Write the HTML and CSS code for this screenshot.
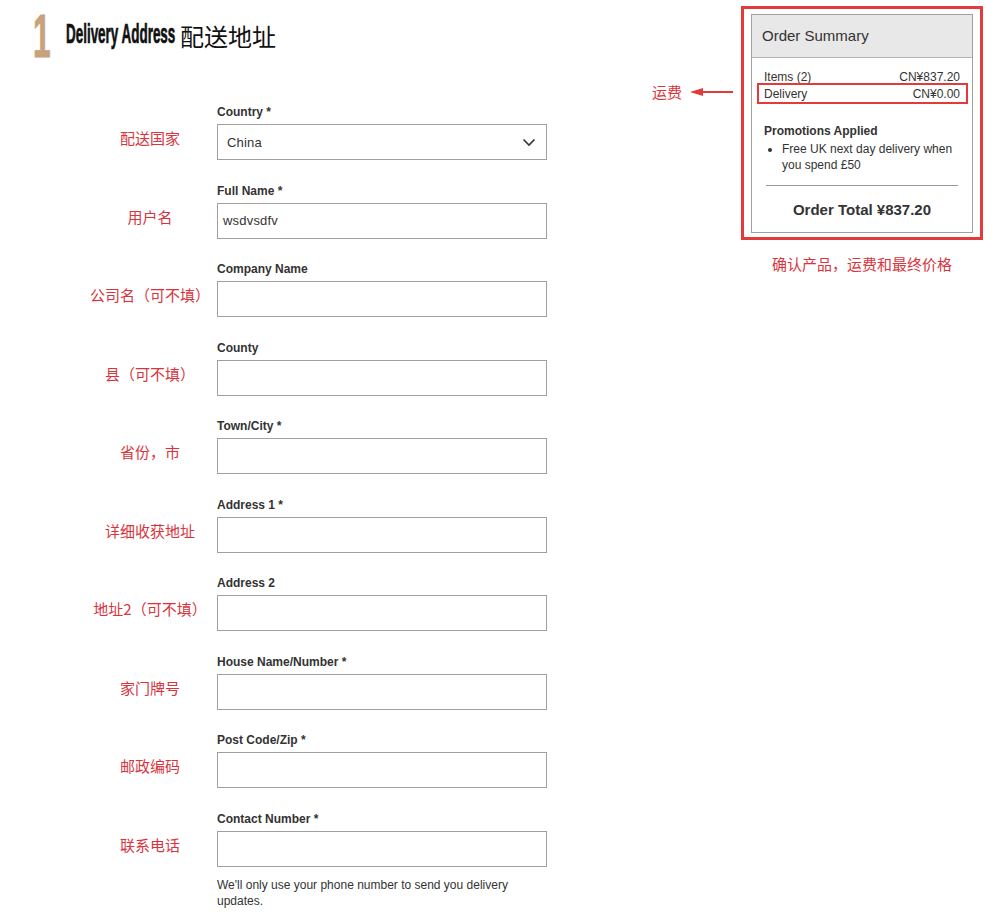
FILE: index.html
```html
<!DOCTYPE html>
<html lang="zh-CN">
<head>
<meta charset="utf-8">
<title>Delivery Address</title>
<link rel="stylesheet" href="styles.css">
</head>
<body>
<div class="layout">
  <div class="main">
    <h1 class="heading">
      <span class="step"><span class="step-num">1</span></span>
      <span class="title-en"><span class="title-en-inner">Delivery Address</span></span>
      <span class="title-zh">配送地址</span>
    </h1>

    <div class="form">
      <div class="field">
        <label class="label">Country *</label>
        <div class="note-zh">配送国家</div>
        <div class="box select"><span class="value value-select">China</span>
          <svg class="chevron" width="14" height="9" viewBox="0 0 14 9"><path d="M1.5 1.5 L7 7 L12.5 1.5" fill="none" stroke="#333" stroke-width="1.6"/></svg>
        </div>
      </div>
      <div class="field">
        <label class="label">Full Name *</label>
        <div class="note-zh">用户名</div>
        <div class="box"><span class="value">wsdvsdfv</span></div>
      </div>
      <div class="field">
        <label class="label">Company Name</label>
        <div class="note-zh">公司名（可不填）</div>
        <div class="box"></div>
      </div>
      <div class="field">
        <label class="label">County</label>
        <div class="note-zh">县（可不填）</div>
        <div class="box"></div>
      </div>
      <div class="field">
        <label class="label">Town/City *</label>
        <div class="note-zh">省份，市</div>
        <div class="box"></div>
      </div>
      <div class="field">
        <label class="label">Address 1 *</label>
        <div class="note-zh">详细收获地址</div>
        <div class="box"></div>
      </div>
      <div class="field">
        <label class="label">Address 2</label>
        <div class="note-zh">地址2（可不填）</div>
        <div class="box"></div>
      </div>
      <div class="field">
        <label class="label">House Name/Number *</label>
        <div class="note-zh">家门牌号</div>
        <div class="box"></div>
      </div>
      <div class="field">
        <label class="label">Post Code/Zip *</label>
        <div class="note-zh">邮政编码</div>
        <div class="box"></div>
      </div>
      <div class="field field-last">
        <label class="label">Contact Number *</label>
        <div class="note-zh">联系电话</div>
        <div class="box"></div>
        <p class="hint">We'll only use your phone number to send you delivery updates.</p>
      </div>
    </div>
  </div>

  <div class="aside">
    <div class="shipping-note">
      <span class="shipping-text">运费</span>
      <svg class="arrow" width="44" height="10" viewBox="0 0 44 10"><path d="M12 5 L43 5" stroke="#e53a3a" stroke-width="2"/><path d="M0 5 L13 1 L13 9 Z" fill="#e53a3a"/></svg>
    </div>
    <div class="summary-frame">
      <div class="summary">
        <div class="summary-head">Order Summary</div>
        <div class="summary-body">
          <div class="row"><span>Items (2)</span><span>CN¥837.20</span></div>
          <div class="row row-delivery"><span>Delivery</span><span>CN¥0.00</span><span class="mark"></span></div>
          <div class="promo-title">Promotions Applied</div>
          <ul class="promo-list">
            <li>Free UK next day delivery when you spend £50</li>
          </ul>
          <div class="divider"></div>
          <div class="total">Order Total ¥837.20</div>
        </div>
      </div>
    </div>
    <div class="summary-note">确认产品，运费和最终价格</div>
  </div>
</div>
</body>
</html>
```

FILE: styles.css
```css
html, body {
  margin: 0;
  padding: 0;
  background: #ffffff;
}
body {
  font-family: "Liberation Sans", Arial, sans-serif;
  color: #333333;
}
.layout {
  display: flex;
  align-items: flex-start;
}
.main {
  flex: 0 0 741px;
}
.heading {
  display: flex;
  align-items: center;
  margin: 0;
  padding: 10px 0 0 36px;
  height: 50px;
  font-weight: normal;
}
.step {
  display: inline-block;
  width: 30px;
  height: 50px;
  position: relative;
}
.step-num {
  position: absolute;
  left: -3px;
  top: -4px;
  font-family: "Liberation Sans", Arial, sans-serif;
  font-weight: bold;
  font-size: 61px;
  line-height: 61px;
  color: #c9a17a;
  transform: scaleX(0.52);
  transform-origin: left top;
  -webkit-text-stroke: 1px #c9a17a;
}
.title-en {
  display: inline-block;
  width: 114px;
  height: 30px;
  position: relative;
}
.title-en-inner {
  position: absolute;
  left: 0;
  top: -2px;
  white-space: nowrap;
  font-weight: bold;
  font-size: 28px;
  line-height: 32px;
  color: #111111;
  transform: scaleX(0.48);
  transform-origin: left top;
  -webkit-text-stroke: 0.7px #111111;
}
.title-zh {
  font-family: "Noto Sans CJK SC", sans-serif;
  font-size: 24px;
  line-height: 30px;
  color: #111111;
  margin-top: 2px;
}
.form {
  margin-top: 44px;
  margin-left: 90px;
}
.field {
  display: grid;
  grid-template-columns: 120px 330px;
  column-gap: 7px;
  margin-bottom: 22.56px;
}
.field-last {
  margin-bottom: 0;
}
.label {
  grid-column: 2;
  grid-row: 1;
  font-size: 12px;
  line-height: 14px;
  font-weight: bold;
  color: #333333;
  padding-top: 1px;
  margin-bottom: 5px;
}
.note-zh {
  grid-column: 1;
  grid-row: 2;
  align-self: center;
  text-align: center;
  font-family: "Noto Sans CJK SC", sans-serif;
  font-size: 15px;
  line-height: 20px;
  color: #d9343d;
  margin-top: -8px;
}
.box {
  grid-column: 2;
  grid-row: 2;
  height: 34px;
  border: 1px solid #a0a0a0;
  background: #ffffff;
  display: flex;
  align-items: center;
  justify-content: space-between;
  padding: 0 10px 0 5px;
}
.select {
  padding-left: 9px;
}
.value {
  font-size: 13px;
  color: #333333;
  letter-spacing: 0.2px;
}
.chevron {
  display: block;
}
.hint {
  grid-column: 2;
  grid-row: 3;
  margin: 10px 0 0 0;
  font-size: 12px;
  line-height: 16px;
  color: #333333;
}

/* Aside / order summary */
.aside {
  flex: 0 0 242px;
  margin-top: 6px;
  position: relative;
}
.shipping-note {
  position: absolute;
  left: -89px;
  top: 76px;
  display: flex;
  align-items: center;
}
.shipping-text {
  font-family: "Noto Sans CJK SC", sans-serif;
  font-size: 15px;
  line-height: 20px;
  color: #d9343d;
}
.arrow {
  display: block;
  margin-left: 8px;
}
.summary-frame {
  border: 3px solid #e53a3a;
  padding: 5px 7px 4px 7px;
}
.summary {
  border: 1px solid #a0a0a0;
}
.summary-head {
  height: 42px;
  line-height: 42px;
  padding-left: 10px;
  background: #e8e8e8;
  border-bottom: 1px solid #b5b5b5;
  font-size: 15px;
  color: #333333;
}
.summary-body {
  padding: 11px 12px 13px 12px;
}
.row {
  display: flex;
  justify-content: space-between;
  font-size: 12px;
  line-height: 17px;
  color: #333333;
  position: relative;
}
.mark {
  position: absolute;
  left: -7px;
  right: -8px;
  top: -3px;
  bottom: -1px;
  border: 2px solid #e53a3a;
}
.promo-title {
  margin-top: 20px;
  font-size: 12px;
  line-height: 16px;
  font-weight: bold;
  color: #333333;
}
.promo-list {
  margin: 2px 0 0 0;
  padding-left: 18px;
  font-size: 12px;
  line-height: 16px;
  color: #333333;
}
.divider {
  margin: 12px 2px 0 2px;
  height: 1px;
  background: #999999;
}
.total {
  margin-top: 15px;
  text-align: center;
  font-size: 15px;
  line-height: 18px;
  font-weight: bold;
  color: #333333;
}
.summary-note {
  margin-top: 14px;
  text-align: center;
  font-family: "Noto Sans CJK SC", sans-serif;
  font-size: 15px;
  line-height: 20px;
  color: #d9343d;
}
```
